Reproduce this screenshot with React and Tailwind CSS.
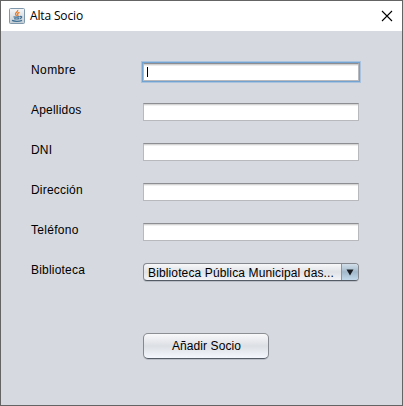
const fields = [
  { label: "Nombre", focused: true, tracking: "tracking-[0.42px]" },
  { label: "Apellidos", tracking: "tracking-[0.2px]" },
  { label: "DNI", tracking: "tracking-[0.2px]" },
  { label: "Dirección", tracking: "tracking-[0.2px]" },
  { label: "Teléfono", tracking: "tracking-[0.3px]" },
];

function JavaIcon() {
  return (
    <svg width="16" height="16" viewBox="0 0 16 16" className="shrink-0">
      <defs>
        <linearGradient id="tile" x1="0" y1="0" x2="0" y2="1">
          <stop offset="0" stopColor="#f6f7f8" />
          <stop offset="1" stopColor="#c4cdd4" />
        </linearGradient>
      </defs>
      <rect x="0.5" y="0.5" width="15" height="15" rx="1" fill="url(#tile)" stroke="#7f98ab" />
      <path d="M8.7 2c.6 2-2.6 2.5-2.2 4.2.1.7.9 1.1 1 1.9M10.5 4.4C8.6 5.3 8 5.9 8.7 6.7c.4.5.1 1-.3 1.3" fill="none" stroke="#e87a28" strokeWidth="1.3" />
      <path d="M4.5 8.7c1.7.6 4.4.5 6.2 0M5.2 10.6c1.4.5 3.4.5 4.9 0M11 8.6c2.3-.7 2.6 1.3-.3 2.3M3 12.4c2.3 1.2 7.2 1.2 10 0" fill="none" stroke="#3f7096" strokeWidth="1.2" />
    </svg>
  );
}

function TextField({ focused }) {
  return (
    <div
      className={
        "flex h-[18px] w-[216px] items-center border border-t-[#8d8e92] border-x-[#b8b9bd] border-b-[#b8b9bd] bg-white " +
        (focused
          ? "shadow-[inset_0_1px_0_#d0d0d0,inset_0_2px_0_#ebebeb,0_0_0_1px_#73a4d1,0_0_0_2px_#a9c3de]"
          : "shadow-[inset_0_1px_0_#d5d5d5,inset_0_2px_0_#f0f0f0]")
      }
    >
      {focused && <span className="ml-[3px] h-[10px] w-px bg-black" />}
    </div>
  );
}

export default function App() {
  return (
    <div className="flex h-[406px] w-[403px] flex-col border border-[#646464] bg-[#d6d9df] font-['Liberation_Sans',Arial,sans-serif] text-[12px] leading-[14px] text-black">
      <header className="flex h-[30px] shrink-0 items-center bg-white pl-2 pr-[9px]">
        <JavaIcon />
        <span className="ml-[5px] grow whitespace-nowrap font-['Open_Sans','Noto_Sans',sans-serif] text-[12px] tracking-[-0.15px]">Alta Socio</span>
        <svg width="12" height="12" viewBox="0 0 12 12" className="shrink-0">
          <path d="M1 1l10 10M11 1L1 11" stroke="#000" strokeWidth="1.1" />
        </svg>
      </header>
      <main className="flex flex-col pl-[30px] pt-8">
        {fields.map((f) => (
          <div key={f.label} className="flex h-10 items-start">
            <span className={"w-[112px] whitespace-nowrap " + f.tracking}>{f.label}</span>
            <TextField focused={f.focused} />
          </div>
        ))}
        <div className="flex h-[70px] items-start">
          <span className="w-[112px] tracking-[0.2px]">Biblioteca</span>
          <div className="flex h-[18px] w-[216px] overflow-hidden rounded-[4px] border border-t-[#85888e] border-x-[#85888e] border-b-[#555b64] bg-linear-to-b from-[#f8f8fa] via-[#dfe2e6] to-[#f2f4f8] shadow-[0_1px_0_#b9bdc5]">
            <span className="grow whitespace-nowrap pl-1 pt-[2px] tracking-[0.13px]">Biblioteca Pública Municipal das...</span>
            <span className="flex w-[17px] shrink-0 items-center justify-center border-l border-[#7e99b0] bg-linear-to-b from-[#d2dfe9] via-[#a2b9cb] to-[#c1d9ea]">
              <svg width="8" height="7" viewBox="0 0 8 7">
                <path d="M0.5 0.5h7L4 6.5z" fill="#1b1e22" />
              </svg>
            </span>
          </div>
        </div>
        <button className="ml-[112px] h-[26px] w-[126px] rounded-[5px] border border-t-[#8c8f94] border-x-[#85888e] border-b-[#555b64] bg-linear-to-b from-[#f9f9fb] via-[#dcdfe4] to-[#f4f7fd] pl-px tracking-[0.1px] shadow-[0_1px_0_#b9bdc5]">
          Añadir Socio
        </button>
      </main>
    </div>
  );
}
